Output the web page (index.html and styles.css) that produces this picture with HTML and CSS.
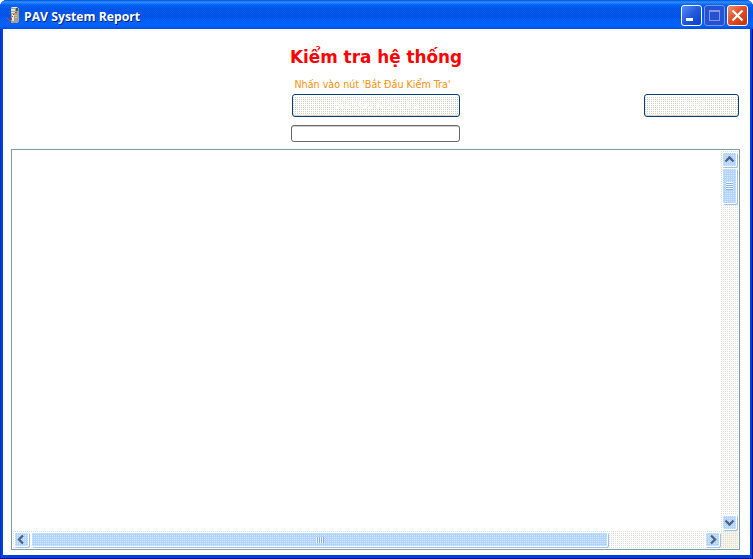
FILE: index.html
```
<!DOCTYPE html>
<html lang="vi">
<head>
<meta charset="utf-8">
<title>PAV System Report</title>
<link rel="stylesheet" href="styles.css">
</head>
<body>
<div class="window">
  <header class="titlebar">
    <svg class="app-icon" width="16" height="18" viewBox="0 0 16 18" shape-rendering="crispEdges">
      <path d="M4 1h7v1h1v14h-1v1H4V2z" fill="#a0a098"/>
      <path d="M5 1h5v1H5zM4 6h5v1H4zM5 8h2v7H5z" fill="#e8e8d8"/>
      <path d="M9 2h2v3h-2z" fill="#286058"/><path d="M4 3h4v2H4z" fill="#d8e8d0"/>
      <path d="M7 9h3v1H7zM8 11h2v1H8z" fill="#e0c840"/>
      <path d="M0 12h1v1h1v1h1v1H2v-1H1v-1H0zM3 14h1v-2h1v2H4v1H3zM5 10h1v1H5zM6 8h1v1H6zM8 6h2v1H8z" fill="#e83828"/>
    </svg>
    <span class="title">PAV System Report</span>
    <div class="controls">
      <span class="ctl"><svg width="19" height="19" viewBox="0 0 19 19"><path d="M4 12h7v3H4z" fill="#fff"/></svg></span>
      <span class="ctl disabled"><svg width="19" height="19" viewBox="0 0 19 19" shape-rendering="crispEdges"><path d="M4.500 4.500h10v10h-10zM4.500 5.500h10" fill="none" stroke="#8795e4"/></svg></span>
      <span class="ctl close"><svg width="19" height="19" viewBox="0 0 19 19"><path d="M4.500 4.500l10 10M14.500 4.500l-10 10" stroke="#fff" stroke-width="2.200"/></svg></span>
    </div>
  </header>
  <main class="client">
    <h1><span class="heading-text">Kiểm tra hệ thống</span></h1>
    <p class="hint"><span class="hint-text">Nhấn vào nút 'Bắt Đầu Kiểm Tra'</span></p>
    <div class="actions">
      <button class="btn start">Bắt Đầu Kiểm Tra</button>
      <button class="btn exit">Thoát</button>
    </div>
    <div class="progress"></div>
    <div class="report">
      <div class="paper"></div>
      <div class="vbar">
        <span class="sbtn"><svg width="15" height="15" viewBox="0 0 15 15"><path d="M3.500 9.500l4-4 4 4" class="arrow"/></svg></span>
        <span class="thumb vthumb"><i></i></span>
        <span class="sbtn last"><svg width="15" height="15" viewBox="0 0 15 15"><path d="M3.500 5.500l4 4 4-4" class="arrow"/></svg></span>
      </div>
      <div class="hbar">
        <span class="sbtn"><svg width="15" height="15" viewBox="0 0 15 15"><path d="M9 3.500l-4 4 4 4" class="arrow"/></svg></span>
        <span class="thumb hthumb"><i></i></span>
        <span class="sbtn last"><svg width="15" height="15" viewBox="0 0 15 15"><path d="M6 3.500l4 4-4 4" class="arrow"/></svg></span>
      </div>
      <div class="corner"></div>
    </div>
  </main>
</div>
</body>
</html>
```
FILE: styles.css
```
* { box-sizing: border-box; }
body { margin: 0; background: #fff; font-family: "DejaVu Sans Condensed", "DejaVu Sans", sans-serif; overflow: hidden; }
.window {
  width: 753px; height: 559px; display: flex; flex-direction: column;
  background: #0040dd; border-radius: 7px 7px 0 0; overflow: hidden;
  box-shadow: inset -1px -1px #001090, inset 1px 0 #0033cc;
}
.titlebar {
  height: 29px; flex: none; display: flex; align-items: flex-start; padding: 5px 5px 0 6px;
  background:
    conic-gradient(#0033cc30 25%, transparent 0 50%, #0033cc30 0 75%, transparent 0) 0 0 / 2px 2px,
    linear-gradient(#0050e0 0, #3399ff 2px, #0066ff 5px, #005ae8 9px, #0058ea 16px, #0066ff 22px, #0066ff 26px, #0050dd 29px);
}
.app-icon { margin: 1px 0 0 1px; }
.title {
  margin: 3px 0 0 1px; color: #fff; font: bold 13px/16px "Open Sans", sans-serif;
  width: 120px; white-space: nowrap; text-shadow: 1px 1px #002080; transform: scaleX(.94); transform-origin: left;
}
.controls { margin-left: auto; display: flex; gap: 2px; }
.ctl { width: 21px; height: 21px; border: 1px solid #fff; border-radius: 3px; background: linear-gradient(135deg, #5a8cf8, #2458dc 50%, #0044cc); }
.ctl svg { display: block; }
.disabled { border-color: #7992e4; background: #2452d2; }
.close { background: linear-gradient(135deg, #f09070, #e05028 45%, #c83208); }
.client { margin: 0 3px 4px; flex: 1; background: #fff; padding: 16px 10px 5px 8px; display: flex; flex-direction: column; }
h1 { height: 24px; margin: 0; text-align: center; font: bold 18px/24px "DejaVu Sans", sans-serif; color: #f00; padding-left: 2px; }
.heading-text { display: inline-block; white-space: nowrap; transform: scaleX(.935); }
.hint { margin: 9px 0 0; height: 14px; font: 11px/14px "DejaVu Sans Condensed", sans-serif; color: #f0920c; text-align: center; padding-right: 6px; }
.hint-text { display: inline-block; white-space: nowrap; transform: scaleX(.97); }
.actions { display: flex; margin-top: 2px; padding: 0 1px 0 281px; justify-content: space-between; }
.btn {
  height: 23px; border: 1px solid #004080; border-radius: 3px; padding: 0 0 2px; color: #fff;
  font: 11px "DejaVu Sans Condensed", sans-serif;
  background: conic-gradient(#fffffa 75%, #cfcfcb 0) 0 0 / 2px 2px;
  box-shadow: inset 0 -1px #d6d0b8, inset 0 2px #fff;
}
.start { width: 168px; }
.exit { width: 95px; }
.progress { width: 169px; height: 17px; margin: 8px 0 0 280px; border: 1px solid #686868; border-radius: 3px; box-shadow: inset 0 1px #ccc; }
.report {
  margin-top: 7px; height: 401px; border: 1px solid #809da3; padding: 1px;
  display: grid; grid-template: 1fr 17px / 1fr 17px; width: 729px;
}
.vbar, .hbar { display: flex; padding: 1px; background: conic-gradient(#fff 75%, #deded8 0) 0 0 / 2px 2px; }
.vbar { flex-direction: column; gap: 1px; }
.hbar { gap: 1px; }
.sbtn, .thumb {
  flex: none; border: 1px solid #fff; border-radius: 2px; box-shadow: 1px 1px #a6bfe6;
  background: conic-gradient(#bcd0ff 75%, #b8f4f8 0) 0 0 / 2px 2px;
}
.sbtn { width: 15px; height: 15px; }
.sbtn svg { display: block; margin: -1px; }
.last { margin-left: auto; margin-top: auto; }
.hbar .last { margin-top: 0; }
.vbar .sbtn, .vthumb { margin-left: 0; }
.thumb { display: flex; align-items: center; justify-content: center; }
.vthumb { width: 15px; height: 36px; }
.hthumb { width: 577px; height: 15px; margin-left: 1px; }
.vthumb i { width: 7px; height: 8px; background: repeating-linear-gradient(#f4faff 0 1px, #8caef0 1px 2px); }
.hthumb i { width: 8px; height: 6px; background: repeating-linear-gradient(90deg, #f4faff 0 1px, #8caef0 1px 2px); }
.arrow { fill: none; stroke: #4d6185; stroke-width: 2.3; }
.corner { background: conic-gradient(#f6f4e8 75%, #dcdcd0 0) 0 0 / 2px 2px; }
```
